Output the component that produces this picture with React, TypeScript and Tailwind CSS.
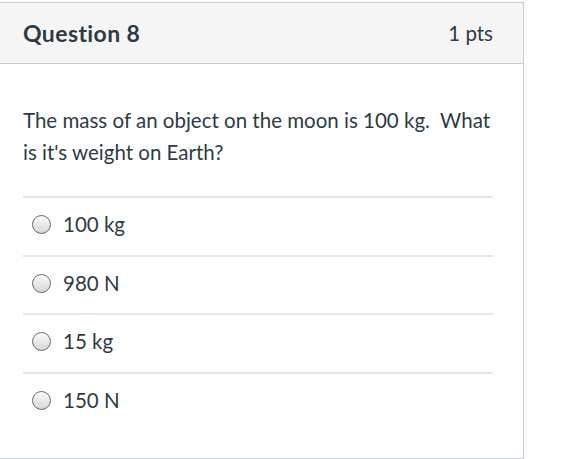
import React from 'react';

const options = ['100 kg', '980 N', '15 kg', '150 N'];

const Radio: React.FC = () => (
  <span className="inline-block w-[19px] h-[19px] rounded-full border-[1.5px] border-[#6b6b6b] bg-gradient-to-b from-[#fbfbfb] to-[#d6d6d6] shrink-0" />
);

export default function App() {
  return (
    <div className="w-[572px] h-[459px] bg-white overflow-hidden pt-[2px] font-['Lato','Open_Sans',sans-serif] text-[#2d3b45]">
      <div className="-ml-px w-[525px] h-[457px] border border-[#c7cdd1] bg-white">
        {/* header */}
        <div className="h-[61px] flex items-center justify-between bg-[#f5f5f5] border-b border-[#c7cdd1] pl-[23px] pr-[30px]">
          <h2 className="text-[23px] font-bold leading-none tracking-[0.4px]">Question 8</h2>
          <span className="text-[20.5px] leading-none">1 pts</span>
        </div>

        {/* body */}
        <div className="pt-[40px] pl-[23px] pr-[28px]">
          <p className="text-[20.5px] leading-[32px]">
            The mass of an object on the moon is 100 kg.&nbsp; What is it's weight on Earth?
          </p>
          <div className="mt-[28px] mr-[2px]">
            {options.map((o) => (
              <label key={o} className="flex items-center gap-[12px] h-[58.5px] border-t-2 border-[#e6e6e6] pl-[9px] pb-[3px] text-[20.5px]">
                <Radio />
                <span>{o}</span>
              </label>
            ))}
          </div>
        </div>
      </div>
    </div>
  );
}
